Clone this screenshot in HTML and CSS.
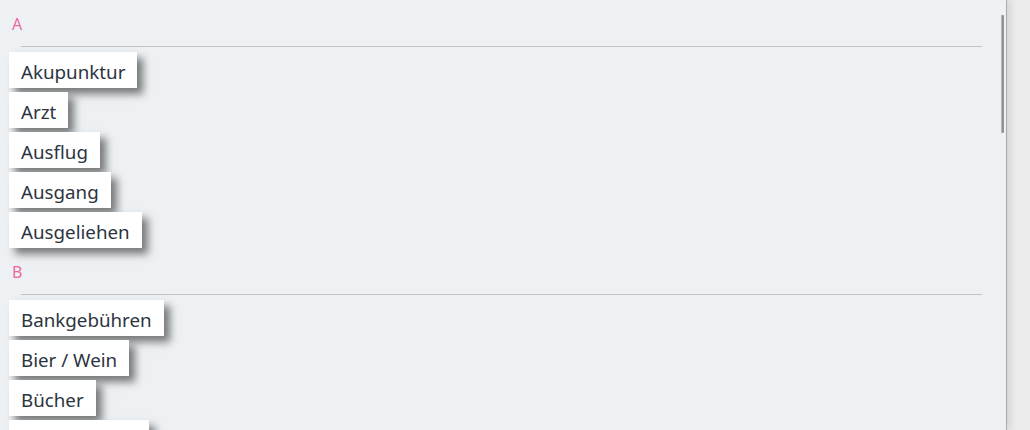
FILE: index.html
```html
<!DOCTYPE html>
<html lang="de">
<head>
<meta charset="utf-8">
<title>Kategorien</title>
<link rel="stylesheet" href="styles.css">
</head>
<body>
<div class="app">
  <div class="panel">
    <div class="list">
      <section class="group">
        <div class="group-head"><span class="letter">A</span><div class="rule"></div></div>
        <div class="chips">
          <div class="chip">Akupunktur</div>
          <div class="chip">Arzt</div>
          <div class="chip">Ausflug</div>
          <div class="chip">Ausgang</div>
          <div class="chip">Ausgeliehen</div>
        </div>
      </section>
      <section class="group">
        <div class="group-head"><span class="letter">B</span><div class="rule"></div></div>
        <div class="chips">
          <div class="chip">Bankgebühren</div>
          <div class="chip">Bier / Wein</div>
          <div class="chip">Bücher</div>
          <div class="chip">Büromaterial</div>
        </div>
      </section>
    </div>
    <div class="scroll-thumb"></div>
  </div>
  <div class="side"></div>
</div>
</body>
</html>
```
FILE: styles.css
```css
html, body {
  margin: 0;
  padding: 0;
  height: 100%;
  overflow: hidden;
}
body {
  background: #ececec;
  font-family: "Noto Sans", "Open Sans", sans-serif;
  color: #2b3440;
}
.app {
  display: flex;
  height: 430px;
}
.panel {
  position: relative;
  width: 1006px;
  flex: none;
  height: 430px;
  overflow: hidden;
  background: #edf1f4;
  border-right: 1px solid #a9abad;
  box-shadow: 3px 0 8px rgba(0, 0, 0, 0.12);
  z-index: 1;
}
.side {
  flex: 1;
  background: #ececec;
}
.list {
  display: flex;
  flex-direction: column;
  gap: 4px;
  padding: 4px 0 0 9px;
}
.group {
  display: flex;
  flex-direction: column;
}
.group-head {
  display: flex;
  flex-direction: column;
  padding-top: 10px;
}
.letter {
  font-size: 16px;
  line-height: 20px;
  color: #ec6aa1;
  padding-left: 3px;
}
.rule {
  margin: 12px 24px 5px 12px;
  border-top: 1px solid #c3c6c9;
}
.chips {
  display: flex;
  flex-direction: column;
  align-items: flex-start;
  gap: 4px;
}
.chip {
  box-sizing: border-box;
  background: #ffffff;
  height: 36px;
  padding: 3px 12px 0;
  line-height: 33px;
  font-size: 18.75px;
  box-shadow: 6px 6px 8px rgba(0, 0, 0, 0.5);
  white-space: nowrap;
}
.scroll-thumb {
  position: absolute;
  left: 1001px;
  top: 15px;
  width: 3px;
  height: 118px;
  background: #929292;
  border-radius: 1px;
  box-shadow: inset 1px 0 0 #b5b5b5;
}
```
